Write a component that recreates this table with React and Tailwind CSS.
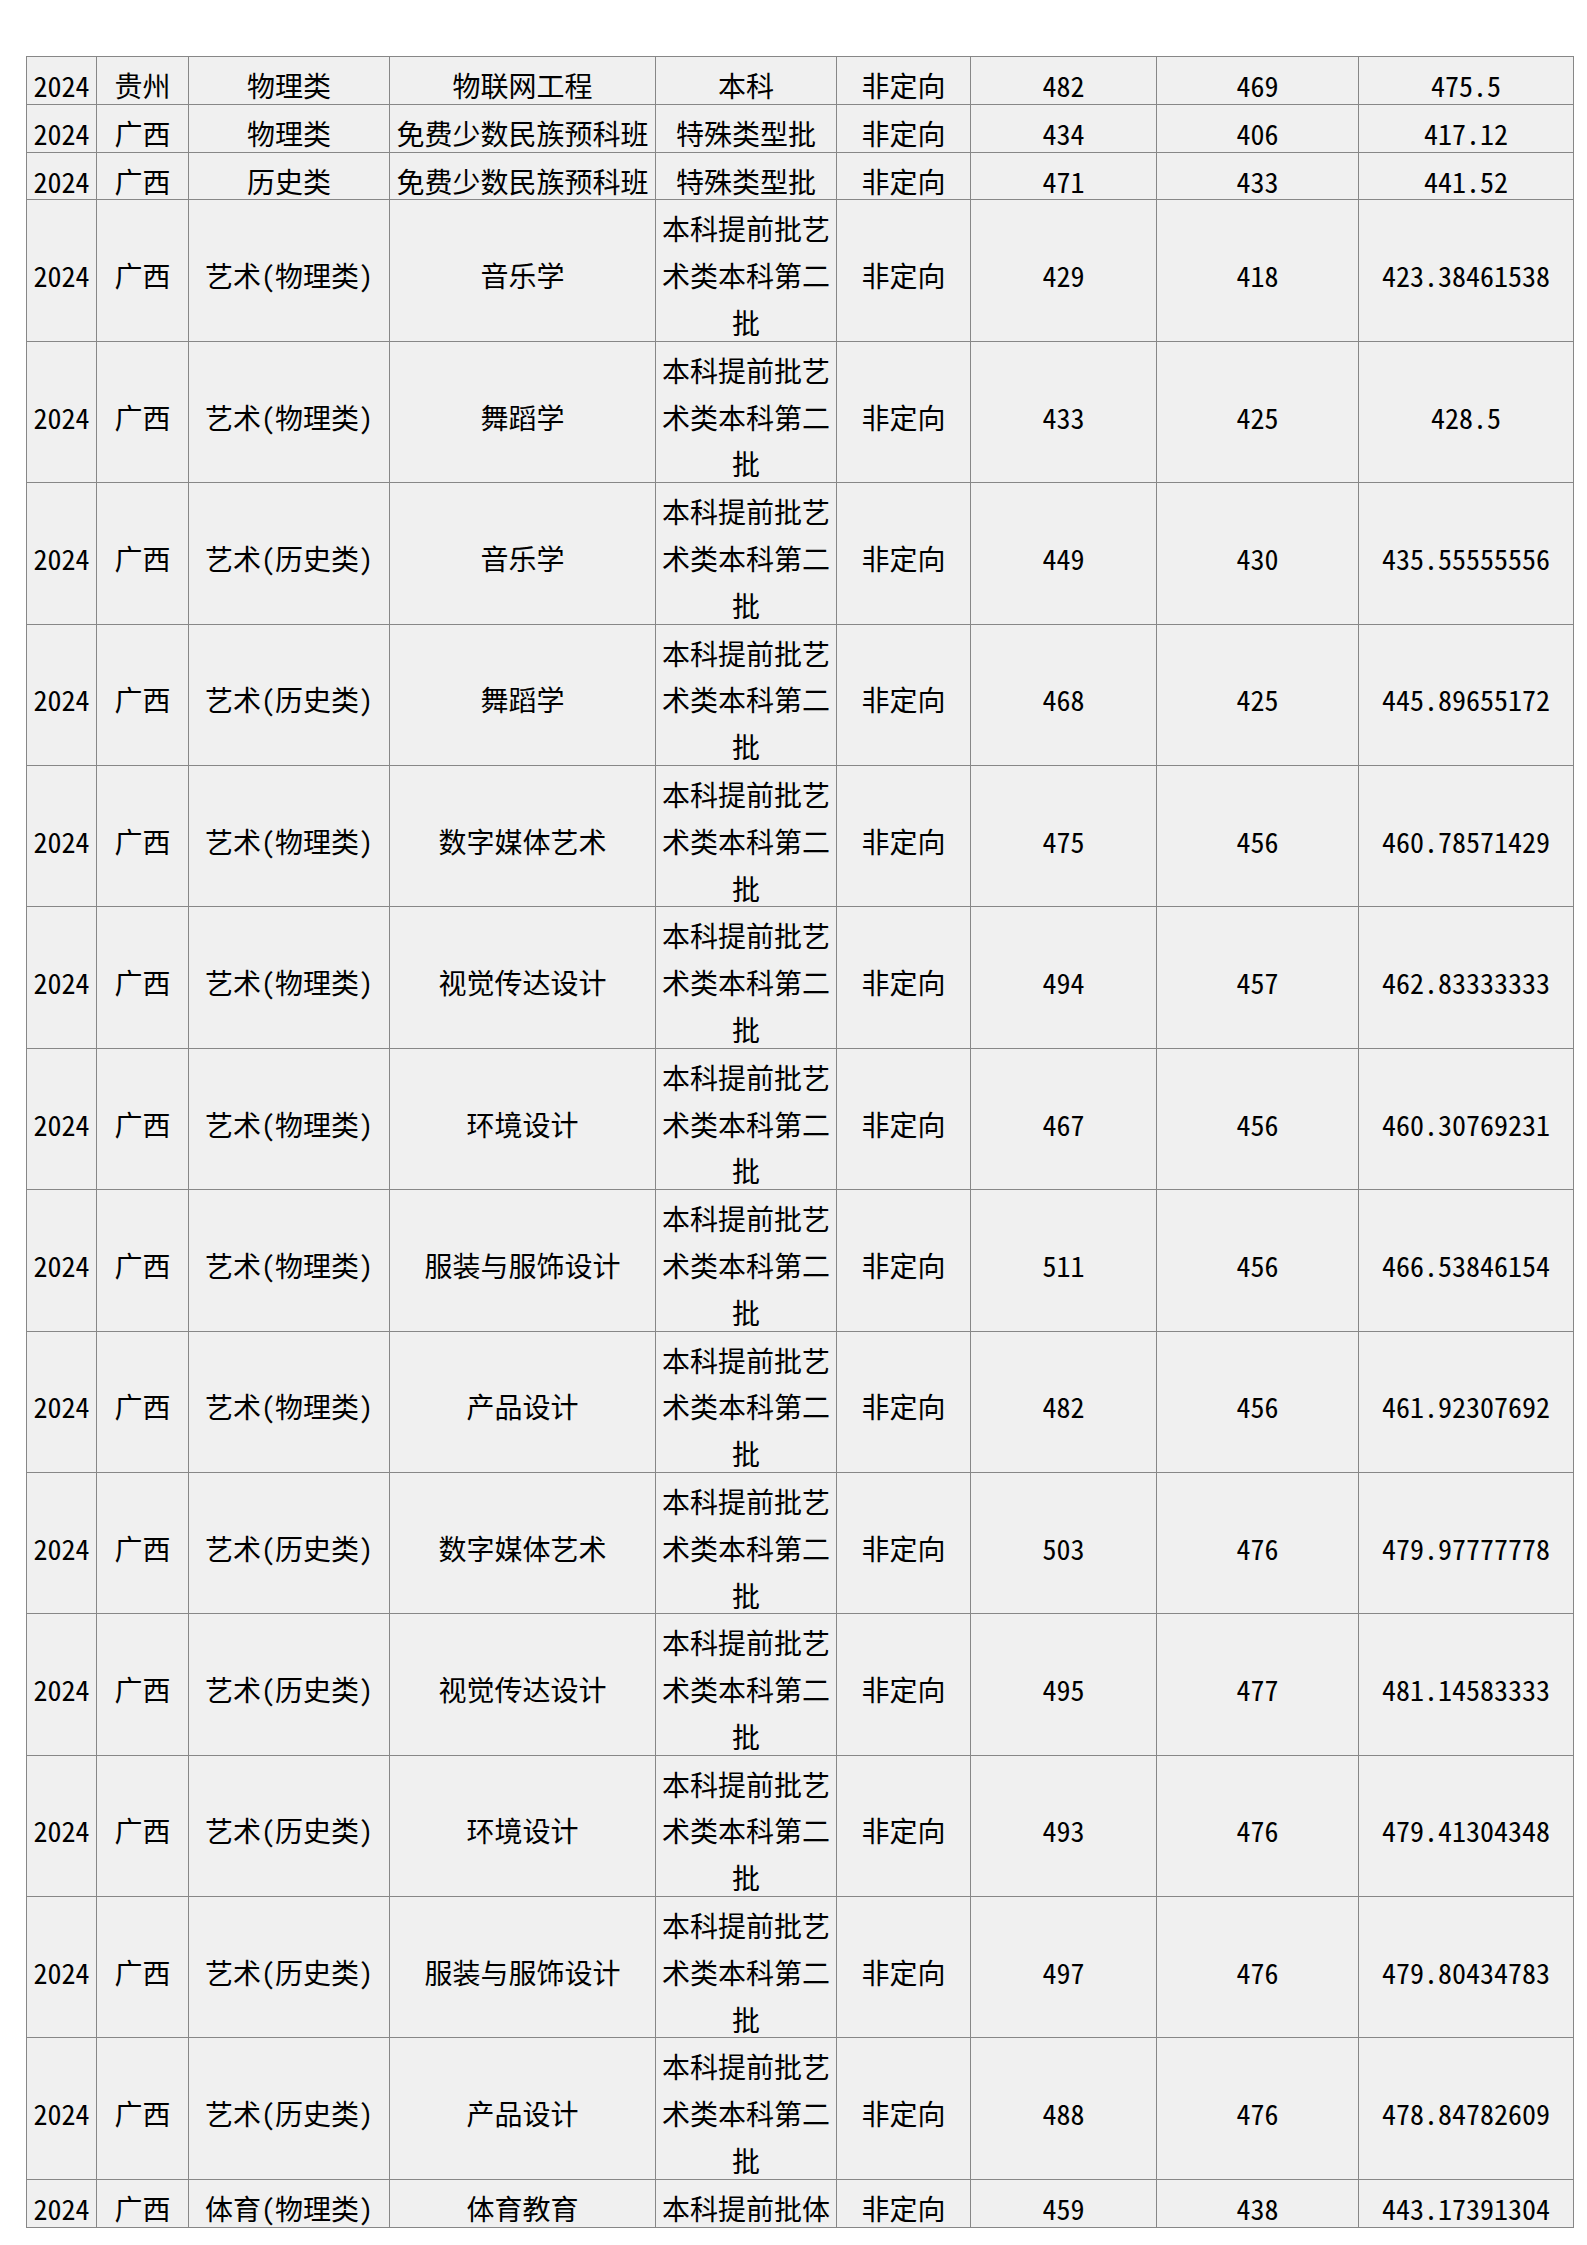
const batchArt = '本科提前批艺术类本科第二批'

const rows = [
    ['2024', '贵州', '物理类', '物联网工程', '本科', '非定向', '482', '469', '475.5'],
    ['2024', '广西', '物理类', '免费少数民族预科班', '特殊类型批', '非定向', '434', '406', '417.12'],
    ['2024', '广西', '历史类', '免费少数民族预科班', '特殊类型批', '非定向', '471', '433', '441.52'],
    ['2024', '广西', '艺术(物理类)', '音乐学', batchArt, '非定向', '429', '418', '423.38461538'],
    ['2024', '广西', '艺术(物理类)', '舞蹈学', batchArt, '非定向', '433', '425', '428.5'],
    ['2024', '广西', '艺术(历史类)', '音乐学', batchArt, '非定向', '449', '430', '435.55555556'],
    ['2024', '广西', '艺术(历史类)', '舞蹈学', batchArt, '非定向', '468', '425', '445.89655172'],
    ['2024', '广西', '艺术(物理类)', '数字媒体艺术', batchArt, '非定向', '475', '456', '460.78571429'],
    ['2024', '广西', '艺术(物理类)', '视觉传达设计', batchArt, '非定向', '494', '457', '462.83333333'],
    ['2024', '广西', '艺术(物理类)', '环境设计', batchArt, '非定向', '467', '456', '460.30769231'],
    ['2024', '广西', '艺术(物理类)', '服装与服饰设计', batchArt, '非定向', '511', '456', '466.53846154'],
    ['2024', '广西', '艺术(物理类)', '产品设计', batchArt, '非定向', '482', '456', '461.92307692'],
    ['2024', '广西', '艺术(历史类)', '数字媒体艺术', batchArt, '非定向', '503', '476', '479.97777778'],
    ['2024', '广西', '艺术(历史类)', '视觉传达设计', batchArt, '非定向', '495', '477', '481.14583333'],
    ['2024', '广西', '艺术(历史类)', '环境设计', batchArt, '非定向', '493', '476', '479.41304348'],
    ['2024', '广西', '艺术(历史类)', '服装与服饰设计', batchArt, '非定向', '497', '476', '479.80434783'],
    ['2024', '广西', '艺术(历史类)', '产品设计', batchArt, '非定向', '488', '476', '478.84782609'],
    ['2024', '广西', '体育(物理类)', '体育教育', '本科提前批体', '非定向', '459', '438', '443.17391304'],
]

export default function App() {
    return (
        <div className="w-[1587px] h-[2245px] bg-white overflow-hidden pt-[56px] pl-[26px]">
            {/* score table */}
            <div
                className="grid grid-cols-[70px_92px_201px_266px_181px_134px_186px_202px_215px] w-[1548px] border-t border-l border-[#878787] bg-[#f0f0f0] text-black text-[28px] leading-[46.8px]"
                style={{ fontFamily: '"Noto Sans Mono CJK SC", "Noto Sans CJK SC", sans-serif' }}
            >
                {rows.map((row, i) =>
                    row.map((cell, j) => (
                        <div
                            key={i + '-' + j}
                            className="flex items-center justify-center text-center border-r border-b border-[#878787] px-[5px]"
                        >
                            {/* text sits a little low in the original cells */}
                            <span className="translate-y-[5px]">{cell}</span>
                        </div>
                    ))
                )}
            </div>
        </div>
    )
}
